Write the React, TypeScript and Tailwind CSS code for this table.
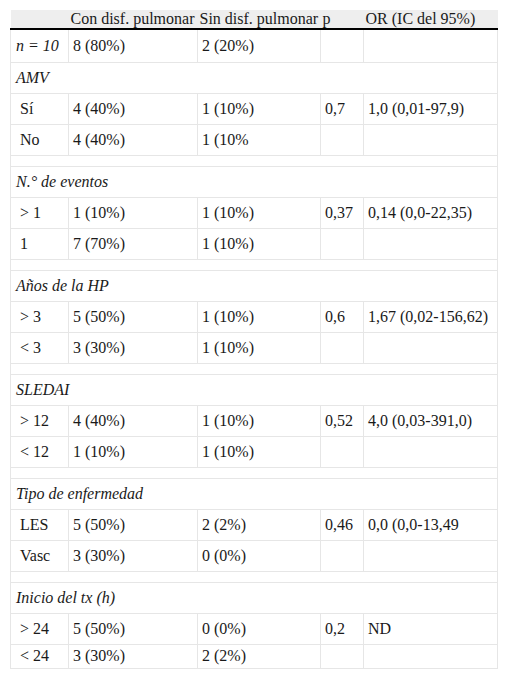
import React from 'react'

type Row =
  | { kind: 'data'; cells: [string, string, string, string, string]; italicFirst?: boolean; last?: boolean }
  | { kind: 'section'; label: string }
  | { kind: 'spacer' }

const rows: Row[] = [
  { kind: 'data', cells: ['n = 10', '8 (80%)', '2 (20%)', '', ''], italicFirst: true },
  { kind: 'section', label: 'AMV' },
  { kind: 'data', cells: ['Sí', '4 (40%)', '1 (10%)', '0,7', '1,0 (0,01-97,9)'] },
  { kind: 'data', cells: ['No', '4 (40%)', '1 (10%', '', ''] },
  { kind: 'spacer' },
  { kind: 'section', label: 'N.° de eventos' },
  { kind: 'data', cells: ['> 1', '1 (10%)', '1 (10%)', '0,37', '0,14 (0,0-22,35)'] },
  { kind: 'data', cells: ['1', '7 (70%)', '1 (10%)', '', ''] },
  { kind: 'spacer' },
  { kind: 'section', label: 'Años de la HP' },
  { kind: 'data', cells: ['> 3', '5 (50%)', '1 (10%)', '0,6', '1,67 (0,02-156,62)'] },
  { kind: 'data', cells: ['< 3', '3 (30%)', '1 (10%)', '', ''] },
  { kind: 'spacer' },
  { kind: 'section', label: 'SLEDAI' },
  { kind: 'data', cells: ['> 12', '4 (40%)', '1 (10%)', '0,52', '4,0 (0,03-391,0)'] },
  { kind: 'data', cells: ['< 12', '1 (10%)', '1 (10%)', '', ''] },
  { kind: 'spacer' },
  { kind: 'section', label: 'Tipo de enfermedad' },
  { kind: 'data', cells: ['LES', '5 (50%)', '2 (2%)', '0,46', '0,0 (0,0-13,49'] },
  { kind: 'data', cells: ['Vasc', '3 (30%)', '0 (0%)', '', ''] },
  { kind: 'spacer' },
  { kind: 'section', label: 'Inicio del tx (h)' },
  { kind: 'data', cells: ['> 24', '5 (50%)', '0 (0%)', '0,2', 'ND'] },
  { kind: 'data', cells: ['< 24', '3 (30%)', '2 (2%)', '', ''], last: true },
]

const headers = ['', 'Con disf. pulmonar', 'Sin disf. pulmonar', 'p', 'OR (IC del 95%)']

export default function App() {
  return (
    <div className="bg-white min-h-[679px] p-[10px] font-['Liberation_Serif',_'Times_New_Roman',_serif] text-[16px] text-[#1a1a1a]">
      <table className="w-[487px] table-fixed border-collapse">
        <colgroup>
          <col className="w-[58px]" />
          <col className="w-[129px]" />
          <col className="w-[123px]" />
          <col className="w-[43px]" />
          <col className="w-[134px]" />
        </colgroup>
        <thead>
          <tr className="bg-[#eeeeee]">
            {headers.map((h, i) => (
              <th
                key={i}
                className="h-[18px] border-b-2 border-b-black px-[2px] py-0 text-left align-middle font-normal leading-[18px] whitespace-nowrap"
              >
                {h}
              </th>
            ))}
          </tr>
        </thead>
        <tbody>
          {rows.map((r, i) => {
            if (r.kind === 'spacer') {
              return (
                <tr key={i}>
                  <td colSpan={5} className="h-[11px] border border-[#e6e6e6] p-0" />
                </tr>
              )
            }
            if (r.kind === 'section') {
              return (
                <tr key={i}>
                  <td colSpan={5} className="h-[31px] border border-[#e6e6e6] px-[5px] py-0 italic leading-[18px]">
                    {r.label}
                  </td>
                </tr>
              )
            }
            return (
              <tr key={i}>
                {r.cells.map((c, j) => (
                  <td
                    key={j}
                    className={
                      (r.last ? 'h-[24px] ' : r.italicFirst ? 'h-[33px] ' : 'h-[31px] ') +
                      'border border-[#e6e6e6] py-0 leading-[18px] whitespace-nowrap ' +
                      (j === 0 ? (r.italicFirst ? 'px-[5px] italic' : 'pl-[9px] pr-[2px]') : 'px-[4px]')
                    }
                  >
                    {c}
                  </td>
                ))}
              </tr>
            )
          })}
        </tbody>
      </table>
    </div>
  )
}
